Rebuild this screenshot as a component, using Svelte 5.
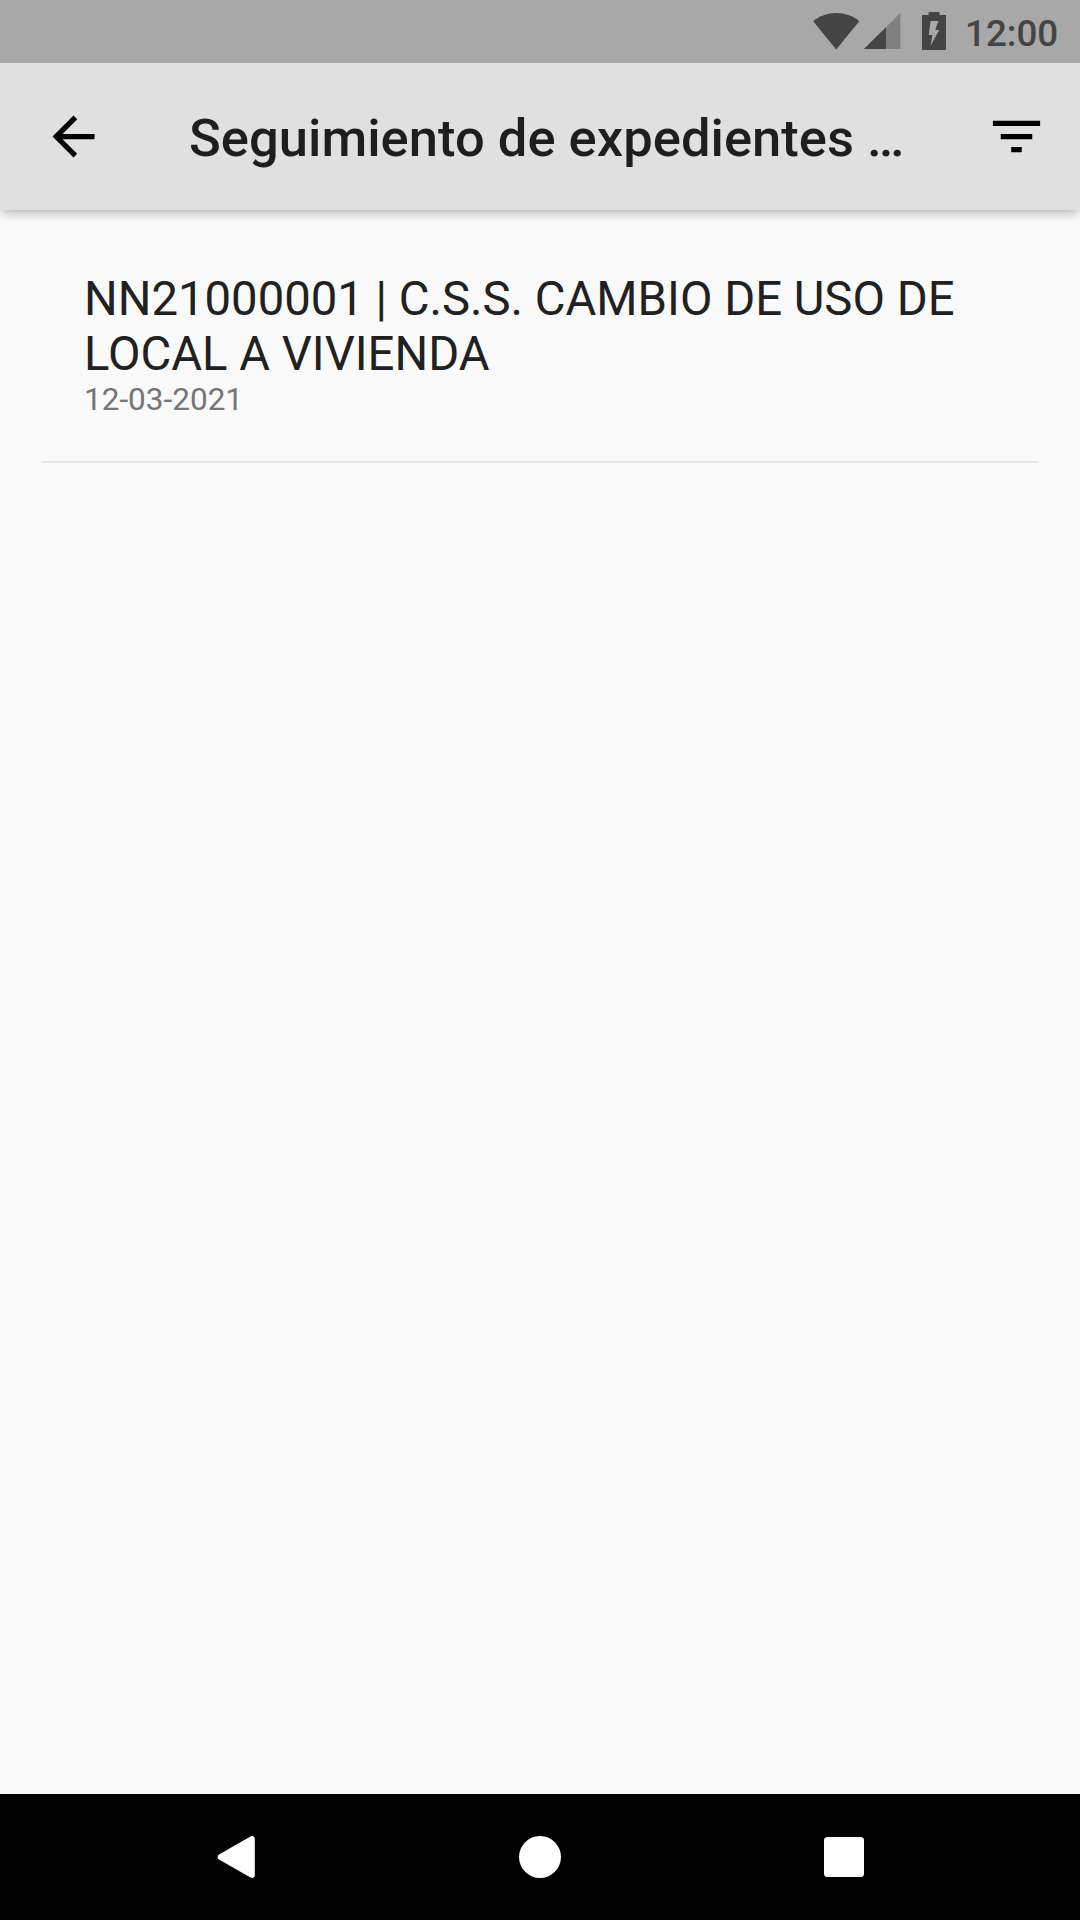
<script lang="ts">
	interface Expediente {
		code: string;
		subject: string;
		date: string;
	}

	export let time: string = '12:00';
	export let title: string = 'Seguimiento de expedientes …';
	export let expedientes: Expediente[] = [
		{
			code: 'NN21000001',
			subject: 'C.S.S. CAMBIO DE USO DE LOCAL A VIVIENDA',
			date: '12-03-2021'
		}
	];
</script>

<div class="screen">
	<!-- System status bar -->
	<div class="status-bar">
		<svg class="wifi" width="47" height="37" viewBox="0 0 47 37" aria-hidden="true">
			<path d="M.2 8.200C6.500 3 14.500 0 23.200 0S40 3 46.300 8.200L23.200 36.500z" />
		</svg>
		<svg class="signal" width="37" height="37" viewBox="0 0 37 37" aria-hidden="true">
			<path class="faded" d="M0 36L36.300 0v36z" />
			<path d="M0 36L22 14.200V36z" />
		</svg>
		<svg class="battery" width="24" height="38" viewBox="0 0 24 38" aria-hidden="true">
			<path d="M6.500 0h11v3H24v35H0V3h6.500z" />
			<path class="bolt" d="M8.500 9h8l-2.500 6.500-.5 2.500h3.700L8.500 34l2-11H6.800z" />
		</svg>
		<span class="time">{time}</span>
	</div>

	<header class="app-bar">
		<button class="icon-button" aria-label="Atrás">
			<svg width="63" height="63" viewBox="0 0 24 24">
				<path d="M20 11H7.830l5.590-5.590L12 4l-8 8 8 8 1.410-1.410L7.830 13H20v-2z" />
			</svg>
		</button>
		<h1>{title}</h1>
		<button class="icon-button" aria-label="Filtrar">
			<svg width="63" height="63" viewBox="0 0 24 24">
				<path d="M10 18h4v-2h-4v2zM3 6v2h18V6H3zm3 7h12v-2H6v2z" />
			</svg>
		</button>
	</header>

	<main class="list">
		{#each expedientes as item}
			<article class="item">
				<p class="name">{item.code} | {item.subject}</p>
				<p class="date">{item.date}</p>
			</article>
		{/each}
	</main>

	<!-- System navigation -->
	<nav class="nav-bar">
		<svg width="42" height="42" viewBox="0 0 42 42" aria-hidden="true">
			<path d="M35.500.5C37.300 -.6 39.800.3 39.800 3v36c0 2.700-2.500 3.600-4.300 2.500L4 23.400c-1.900-1.100-1.900-3.700 0-4.800z" />
		</svg>
		<svg width="42" height="42" viewBox="0 0 42 42" aria-hidden="true">
			<circle cx="21" cy="21" r="21" />
		</svg>
		<svg width="42" height="42" viewBox="0 0 42 42" aria-hidden="true">
			<rect x="1" y="1" width="40" height="40" rx="3.500" />
		</svg>
	</nav>
</div>

<style>
	:global(body) {
		margin: 0;
	}

	.screen {
		display: flex;
		flex-direction: column;
		width: 1080px;
		height: 1920px;
		overflow: hidden;
		background: #fafafa;
		font-family: Roboto, sans-serif;
	}

	svg {
		display: block;
		flex: none;
	}

	.status-bar {
		z-index: 2;
		display: flex;
		justify-content: flex-end;
		flex: none;
		box-sizing: border-box;
		height: 63px;
		padding: 12px 21px 0 0;
		background: #a8a8a8;
		color: #444;
		fill: #444;
	}

	.wifi {
		margin: 1px 4px 0 0;
	}

	.signal {
		margin: 1px 21px 0 0;
	}

	.faded {
		fill: #808080;
	}

	.bolt {
		fill: #a8a8a8;
	}

	.time {
		width: 94px;
		margin-left: 19px;
		font-size: 36.75px;
		font-weight: 500;
		line-height: 43px;
	}

	.app-bar {
		z-index: 1;
		display: flex;
		align-items: center;
		flex: none;
		box-sizing: border-box;
		height: 147px;
		padding: 0 32px 0 42px;
		background: #e0e0e0;
		box-shadow:
			0 5px 10.5px -2.6px rgba(0, 0, 0, 0.2),
			0 3px 10px rgba(0, 0, 0, 0.14);
	}

	.icon-button {
		flex: none;
		padding: 0;
		border: 0;
		background: none;
	}

	h1 {
		flex: 1;
		margin: 2px 42px 0 84px;
		color: #1e1e1e;
		font-size: 52.5px;
		font-weight: 500;
		letter-spacing: 0.03px;
		line-height: 62px;
		white-space: nowrap;
	}

	.list {
		flex: 1;
		padding: 0 42px;
	}

	.item {
		padding: 62px 42px 43px;
		border-bottom: 2px solid #e9e9e9;
	}

	.item p {
		margin: 0;
	}

	.name {
		color: #212121;
		font-size: 47.25px;
		line-height: 55px;
	}

	.date {
		color: #757575;
		font-size: 31.5px;
		line-height: 36px;
	}

	.nav-bar {
		display: flex;
		align-items: center;
		justify-content: center;
		gap: 262px;
		flex: none;
		height: 126px;
		background: #000;
		fill: #fff;
	}
</style>
